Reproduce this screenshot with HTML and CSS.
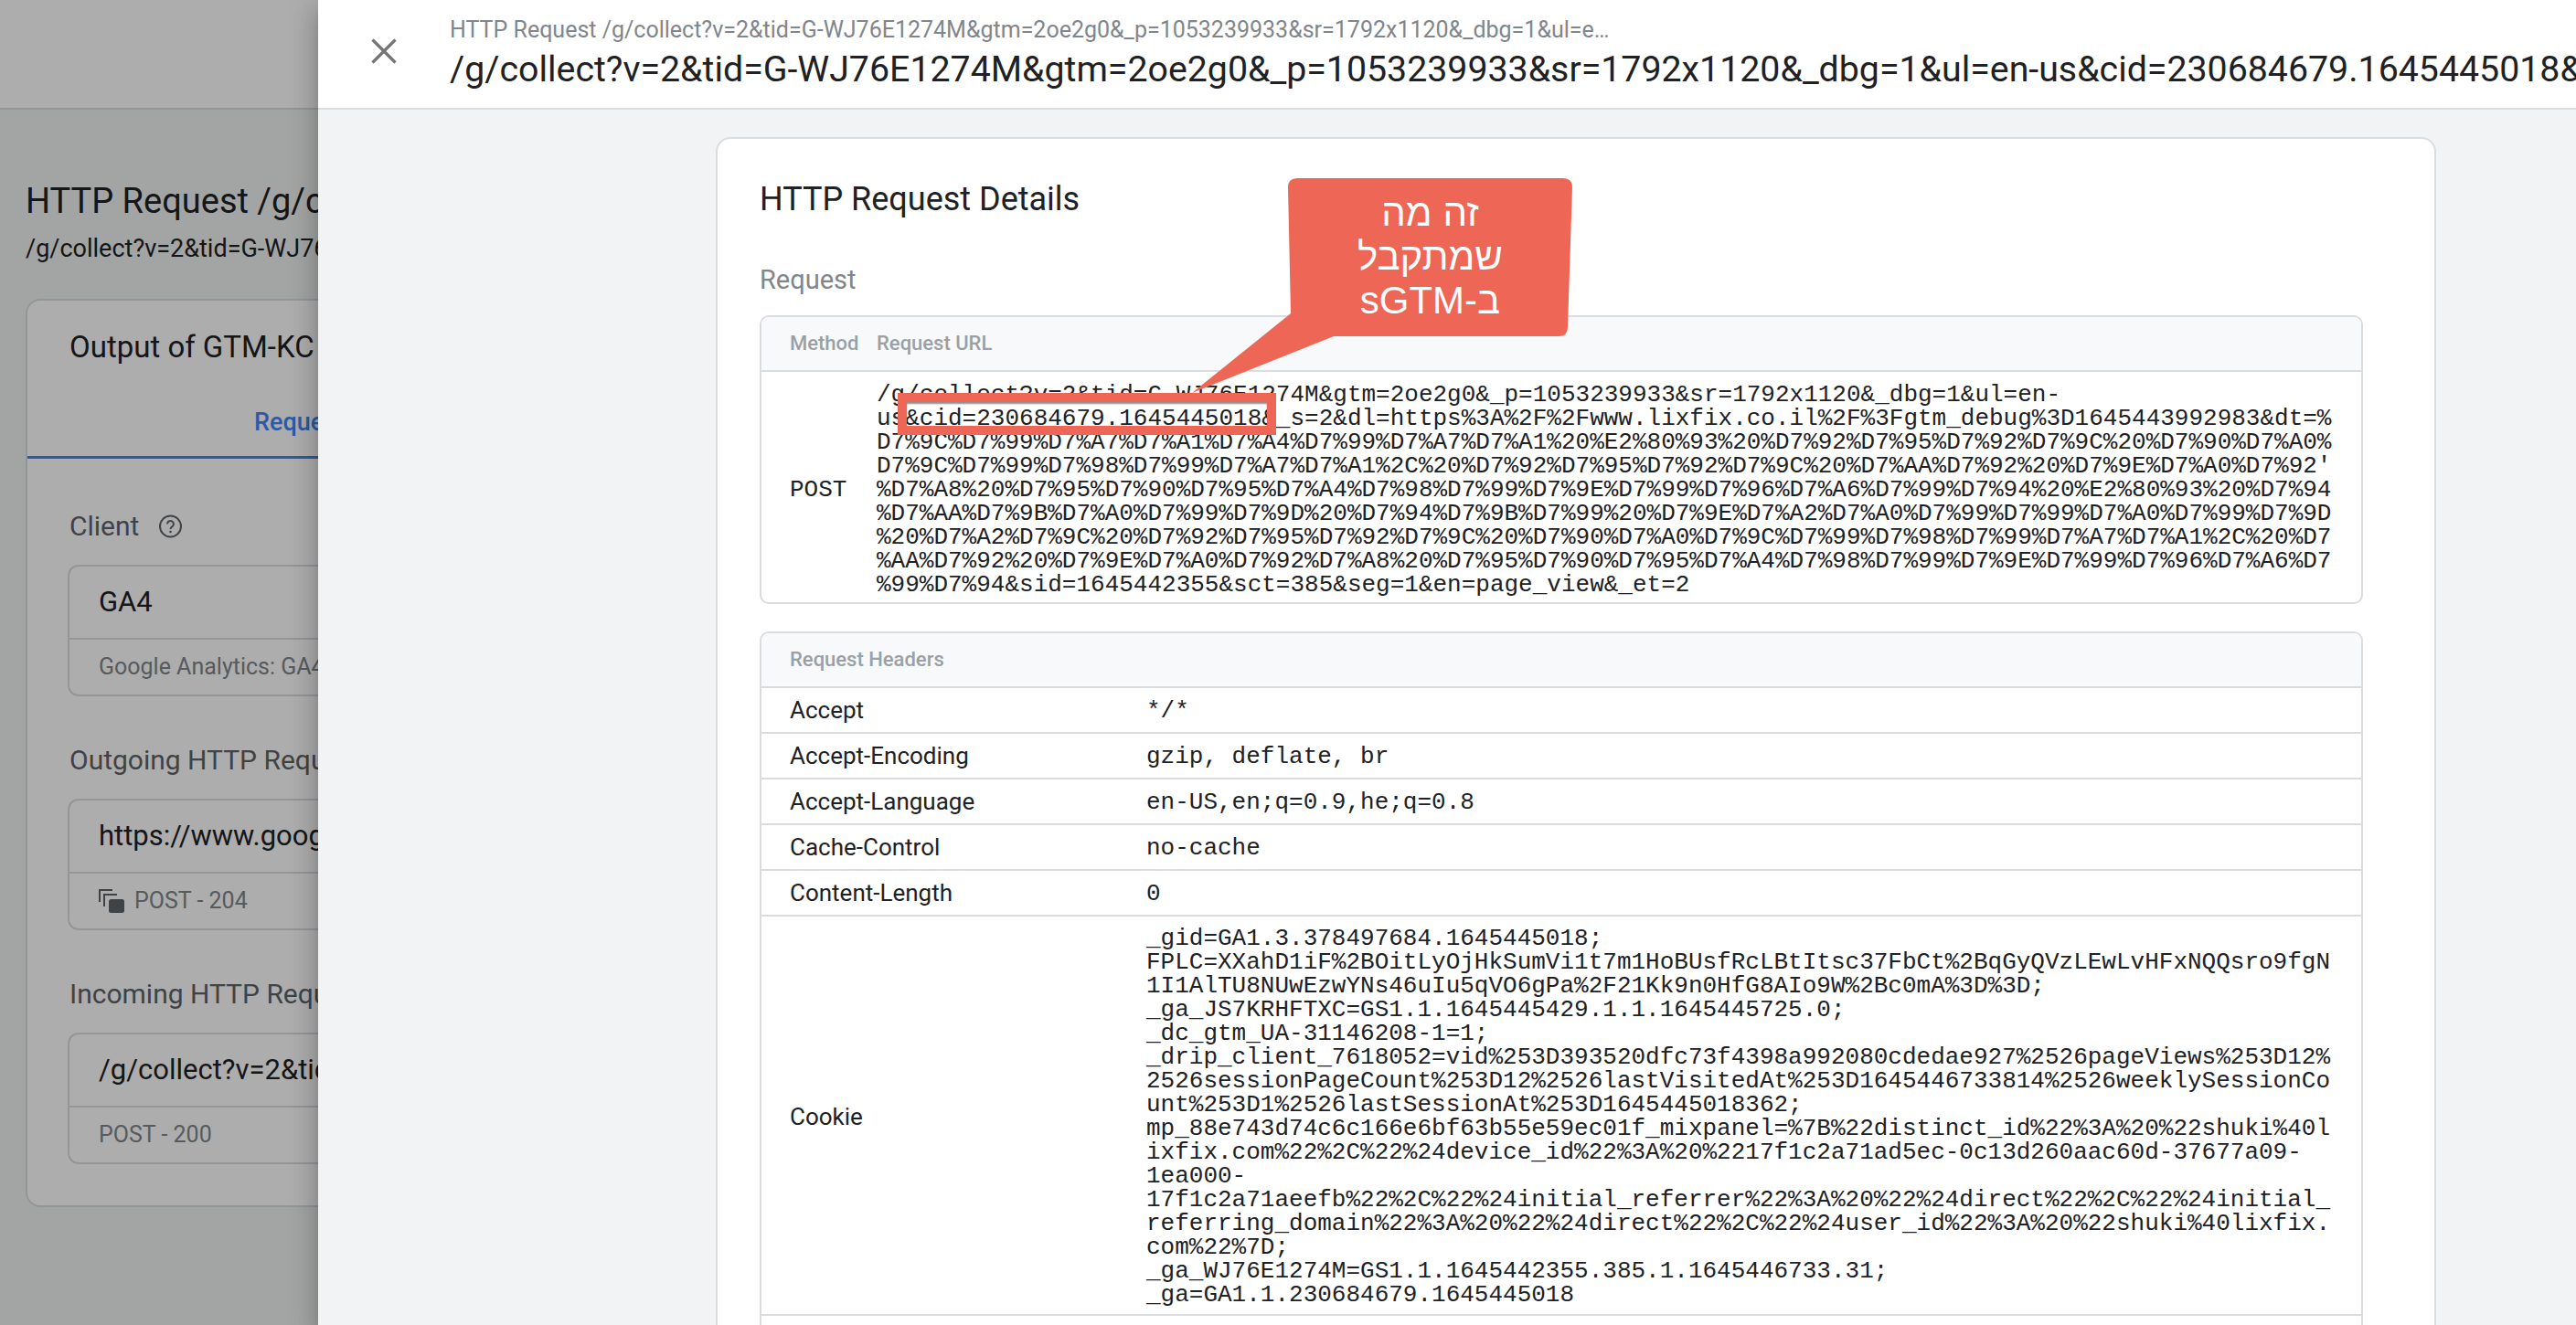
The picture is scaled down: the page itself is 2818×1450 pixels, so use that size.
FILE: index.html
```html
<!DOCTYPE html>
<html lang="en">
<head>
<meta charset="utf-8">
<title>HTTP Request Details</title>
<link rel="stylesheet" href="styles.css">
</head>
<body>
<div class="page">
  <header class="page-bar"></header>
  <main class="page-main">
    <h1 class="page-title">HTTP Request /g/collect?v=2&amp;tid=G-WJ76E1274M</h1>
    <div class="page-sub">/g/collect?v=2&amp;tid=G-WJ76E1274M&amp;gtm=2oe2g0</div>
    <section class="output-card">
      <div class="output-head">
        <h2 class="output-title">Output of GTM-KC</h2>
        <div class="tab">Request</div>
      </div>
      <div class="output-body">
        <div class="field">
          <div class="field-label">Client
            <svg class="help" viewBox="0 0 26 26"><circle cx="13" cy="13" r="11.500" fill="none" stroke="#5f6368" stroke-width="2"/><path d="M9.600 10.400a3.400 3.400 0 1 1 5.400 2.700c-1.200.9-2 1.400-2 3" fill="none" stroke="#5f6368" stroke-width="2"/><circle cx="13" cy="19" r="1.300" fill="#5f6368"/></svg>
          </div>
          <div class="field-box">
            <div class="field-main">GA4</div>
            <div class="field-meta">Google Analytics: GA4</div>
          </div>
        </div>
        <div class="field">
          <div class="field-label">Outgoing HTTP Requests</div>
          <div class="field-box">
            <div class="field-main">https://www.google-analytics.com</div>
            <div class="field-meta">
              <svg class="copies" viewBox="0 0 28 26"><path d="M1 14V1h14M6 19V6h14" fill="none" stroke="#5f6368" stroke-width="2"/><rect x="11" y="11" width="17" height="15" rx="2.500" fill="#5f6368"/></svg>
              POST - 204
            </div>
          </div>
        </div>
        <div class="field">
          <div class="field-label">Incoming HTTP Request</div>
          <div class="field-box">
            <div class="field-main">/g/collect?v=2&amp;tid=G-WJ76E1274M</div>
            <div class="field-meta">POST - 200</div>
          </div>
        </div>
      </div>
    </section>
  </main>
</div>

<div class="scrim"></div>

<aside class="drawer">
  <header class="drawer-bar">
    <div class="close-slot">
      <svg class="close" viewBox="0 0 28 28"><path d="M1.500 1.500L26.500 26.500M26.500 1.500L1.500 26.500" fill="none" stroke="#757575" stroke-width="3.200"/></svg>
    </div>
    <div class="drawer-heads">
      <div class="drawer-crumb">HTTP Request /g/collect?v=2&amp;tid=G-WJ76E1274M&amp;gtm=2oe2g0&amp;_p=1053239933&amp;sr=1792x1120&amp;_dbg=1&amp;ul=e…</div>
      <div class="drawer-title">/g/collect?v=2&amp;tid=G-WJ76E1274M&amp;gtm=2oe2g0&amp;_p=1053239933&amp;sr=1792x1120&amp;_dbg=1&amp;ul=en-us&amp;cid=230684679.1645445018&amp;_s=2</div>
    </div>
  </header>
  <section class="detail-card">
    <h2 class="detail-title">HTTP Request Details</h2>
    <h3 class="detail-section">Request</h3>
    <div class="table">
      <div class="table-head">
        <span class="col-method">Method</span>
        <span>Request URL</span>
      </div>
      <div class="table-row url-row">
        <div class="col-method mono">POST</div>
        <div class="mono">/g/collect?v=2&amp;tid=G-WJ76E1274M&amp;gtm=2oe2g0&amp;_p=1053239933&amp;sr=1792x1120&amp;_dbg=1&amp;ul=en-<br>us&amp;cid=230684679.1645445018&amp;_s=2&amp;dl=https%3A%2F%2Fwww.lixfix.co.il%2F%3Fgtm_debug%3D1645443992983&amp;dt=%<br>D7%9C%D7%99%D7%A7%D7%A1%D7%A4%D7%99%D7%A7%D7%A1%20%E2%80%93%20%D7%92%D7%95%D7%92%D7%9C%20%D7%90%D7%A0%<br>D7%9C%D7%99%D7%98%D7%99%D7%A7%D7%A1%2C%20%D7%92%D7%95%D7%92%D7%9C%20%D7%AA%D7%92%20%D7%9E%D7%A0%D7%92'<br>%D7%A8%20%D7%95%D7%90%D7%95%D7%A4%D7%98%D7%99%D7%9E%D7%99%D7%96%D7%A6%D7%99%D7%94%20%E2%80%93%20%D7%94<br>%D7%AA%D7%9B%D7%A0%D7%99%D7%9D%20%D7%94%D7%9B%D7%99%20%D7%9E%D7%A2%D7%A0%D7%99%D7%99%D7%A0%D7%99%D7%9D<br>%20%D7%A2%D7%9C%20%D7%92%D7%95%D7%92%D7%9C%20%D7%90%D7%A0%D7%9C%D7%99%D7%98%D7%99%D7%A7%D7%A1%2C%20%D7<br>%AA%D7%92%20%D7%9E%D7%A0%D7%92%D7%A8%20%D7%95%D7%90%D7%95%D7%A4%D7%98%D7%99%D7%9E%D7%99%D7%96%D7%A6%D7<br>%99%D7%94&amp;sid=1645442355&amp;sct=385&amp;seg=1&amp;en=page_view&amp;_et=2</div>
      </div>
    </div>
    <div class="table headers-table">
      <div class="table-head">Request Headers</div>
      <div class="table-row header-row"><div class="col-name">Accept</div><div class="mono">*/*</div></div>
      <div class="table-row header-row"><div class="col-name">Accept-Encoding</div><div class="mono">gzip, deflate, br</div></div>
      <div class="table-row header-row"><div class="col-name">Accept-Language</div><div class="mono">en-US,en;q=0.9,he;q=0.8</div></div>
      <div class="table-row header-row"><div class="col-name">Cache-Control</div><div class="mono">no-cache</div></div>
      <div class="table-row header-row"><div class="col-name">Content-Length</div><div class="mono">0</div></div>
      <div class="table-row cookie-row">
        <div class="col-name">Cookie</div>
        <div class="mono">_gid=GA1.3.378497684.1645445018;<br>FPLC=XXahD1iF%2BOitLyOjHkSumVi1t7m1HoBUsfRcLBtItsc37FbCt%2BqGyQVzLEwLvHFxNQQsro9fgN<br>1I1AlTU8NUwEzwYNs46uIu5qVO6gPa%2F21Kk9n0HfG8AIo9W%2Bc0mA%3D%3D;<br>_ga_JS7KRHFTXC=GS1.1.1645445429.1.1.1645445725.0;<br>_dc_gtm_UA-31146208-1=1;<br>_drip_client_7618052=vid%253D393520dfc73f4398a992080cdedae927%2526pageViews%253D12%<br>2526sessionPageCount%253D12%2526lastVisitedAt%253D1645446733814%2526weeklySessionCo<br>unt%253D1%2526lastSessionAt%253D1645445018362;<br>mp_88e743d74c6c166e6bf63b55e59ec01f_mixpanel=%7B%22distinct_id%22%3A%20%22shuki%40l<br>ixfix.com%22%2C%22%24device_id%22%3A%20%2217f1c2a71ad5ec-0c13d260aac60d-37677a09-<br>1ea000-<br>17f1c2a71aeefb%22%2C%22%24initial_referrer%22%3A%20%22%24direct%22%2C%22%24initial_<br>referring_domain%22%3A%20%22%24direct%22%2C%22%24user_id%22%3A%20%22shuki%40lixfix.<br>com%22%7D;<br>_ga_WJ76E1274M=GS1.1.1645442355.385.1.1645446733.31;<br>_ga=GA1.1.230684679.1645445018</div>
      </div>
      <div class="table-row header-row"></div>
    </div>
  </section>
</aside>

<div class="highlight"></div>
<svg class="callout-shape" viewBox="1300 190 425 245"><path d="M1419 195H1710Q1720 195 1720 205L1715 358Q1715 368 1705 368H1459L1304 430L1412 343L1409 205Q1409 195 1419 195Z" fill="#ee6655"/></svg>
<div class="callout-text" dir="rtl">זה מה<br>שמתקבל<br>ב-sGTM</div>
</body>
</html>
```

FILE: styles.css
```css
* { box-sizing: border-box; }
html, body { margin: 0; height: 100%; }
body {
  position: relative;
  width: 2818px;
  height: 1450px;
  overflow: hidden;
  background: #f1f3f4;
  color: #202124;
  font-family: Roboto, "Liberation Sans", sans-serif;
}
h1, h2, h3 { margin: 0; font-weight: 400; }

/* page behind the drawer */
.page-bar { height: 120px; background: #fff; border-bottom: 2px solid #dadce0; }
.page-main { padding: 78px 0 0 28px; }
.page-title { font-size: 38px; line-height: 44px; white-space: nowrap; }
.page-sub { margin-top: 14px; font-size: 27px; line-height: 32px; white-space: nowrap; }
.output-card {
  margin-top: 39px;
  width: 1880px;
  background: #fff;
  border: 2px solid #dadce0;
  border-radius: 16px;
}
.output-head { padding: 31px 0 0 46px; border-bottom: 3px solid #4285f4; }
.output-title { font-size: 33px; line-height: 40px; white-space: nowrap; }
.tab { margin: 47px 0 22px 202px; color: #4285f4; font-size: 27px; line-height: 30px; font-weight: 500; }
.output-body { display: flex; flex-direction: column; gap: 52px; padding: 56px 0 45px 44px; }
.field-label {
  display: flex;
  align-items: center;
  gap: 21px;
  padding-left: 2px;
  color: #5f6368;
  font-size: 30px;
  line-height: 36px;
  white-space: nowrap;
}
.help { width: 27px; height: 26px; }
.field-box { margin-top: 24px; width: 1000px; border: 2px solid #dadce0; border-radius: 12px; }
.field-main {
  height: 80px;
  padding-left: 32px;
  border-bottom: 2px solid #dadce0;
  font-size: 31px;
  line-height: 77px;
  white-space: nowrap;
}
.field-meta {
  display: flex;
  align-items: center;
  gap: 11px;
  height: 60px;
  padding-left: 32px;
  color: #80868b;
  font-size: 25px;
  line-height: 58px;
  white-space: nowrap;
}
.copies { width: 28px; height: 26px; }
.scrim { position: absolute; inset: 0; background: rgba(0, 0, 0, .32); }

/* drawer */
.drawer {
  position: absolute;
  top: 0;
  right: 0;
  bottom: 0;
  left: 348px;
  overflow: hidden;
  background: #f1f3f4;
  box-shadow: 0 8px 10px -5px rgba(0, 0, 0, .2), 0 16px 24px 2px rgba(0, 0, 0, .14), 0 6px 30px 5px rgba(0, 0, 0, .12);
}
.drawer-bar {
  display: flex;
  height: 120px;
  background: #fff;
  border-bottom: 2px solid #dadce0;
}
.close-slot { display: flex; flex: none; align-items: center; justify-content: center; width: 144px; height: 112px; }
.close { width: 28px; height: 28px; }
.drawer-heads { min-width: 0; flex: 1; padding-top: 19px; white-space: nowrap; overflow: hidden; }
.drawer-crumb { color: #80868b; font-size: 25px; line-height: 28px; }
.drawer-title { margin-top: 9px; font-size: 39.300px; line-height: 40px; }

.detail-card {
  margin: 30px 0 0 435px;
  width: 1882px;
  padding: 44px 78px 0 46px;
  background: #fff;
  border: 2px solid #dadce0;
  border-radius: 16px 16px 0 0;
}
.detail-title { font-size: 36px; line-height: 44px; }
.detail-section { margin-top: 48px; color: #80868b; font-size: 29px; line-height: 36px; }
.table { margin-top: 21px; border: 2px solid #dadce0; border-radius: 10px; overflow: hidden; }
.headers-table { margin-top: 30px; }
.table-head {
  display: flex;
  align-items: center;
  height: 60px;
  padding: 0 0 2px 31px;
  background: #f8f9fa;
  border-bottom: 2px solid #dadce0;
  color: #9aa0a6;
  font-size: 22px;
  font-weight: 500;
}
.col-method { flex: none; width: 95px; }
.table-row { display: flex; align-items: center; padding-left: 31px; }
.mono {
  font-family: "Liberation Mono", monospace;
  font-size: 26px;
  line-height: 26px;
  white-space: nowrap;
}
.url-row { height: 252px; padding-top: 6px; }
.col-name { flex: none; width: 390px; font-size: 26px; line-height: 32px; }
.header-row { height: 50px; border-bottom: 2px solid #dadce0; }
.header-row .mono { padding-top: 2px; }
.cookie-row { height: 437px; padding-top: 3px; border-bottom: 2px solid #dadce0; }

/* annotation */
.highlight {
  position: absolute;
  left: 982px;
  top: 430px;
  width: 414px;
  height: 46px;
  border: solid #ee6655;
  border-width: 10px;
  box-shadow: inset 0 2px 2px rgba(0, 0, 0, .45);
}
.callout-shape { position: absolute; left: 1300px; top: 190px; width: 425px; height: 245px; }
.callout-text {
  position: absolute;
  left: 1409px;
  top: 209px;
  width: 311px;
  color: #fff;
  font-family: "Liberation Sans", sans-serif;
  font-size: 42px;
  line-height: 48px;
  text-align: center;
}
```
